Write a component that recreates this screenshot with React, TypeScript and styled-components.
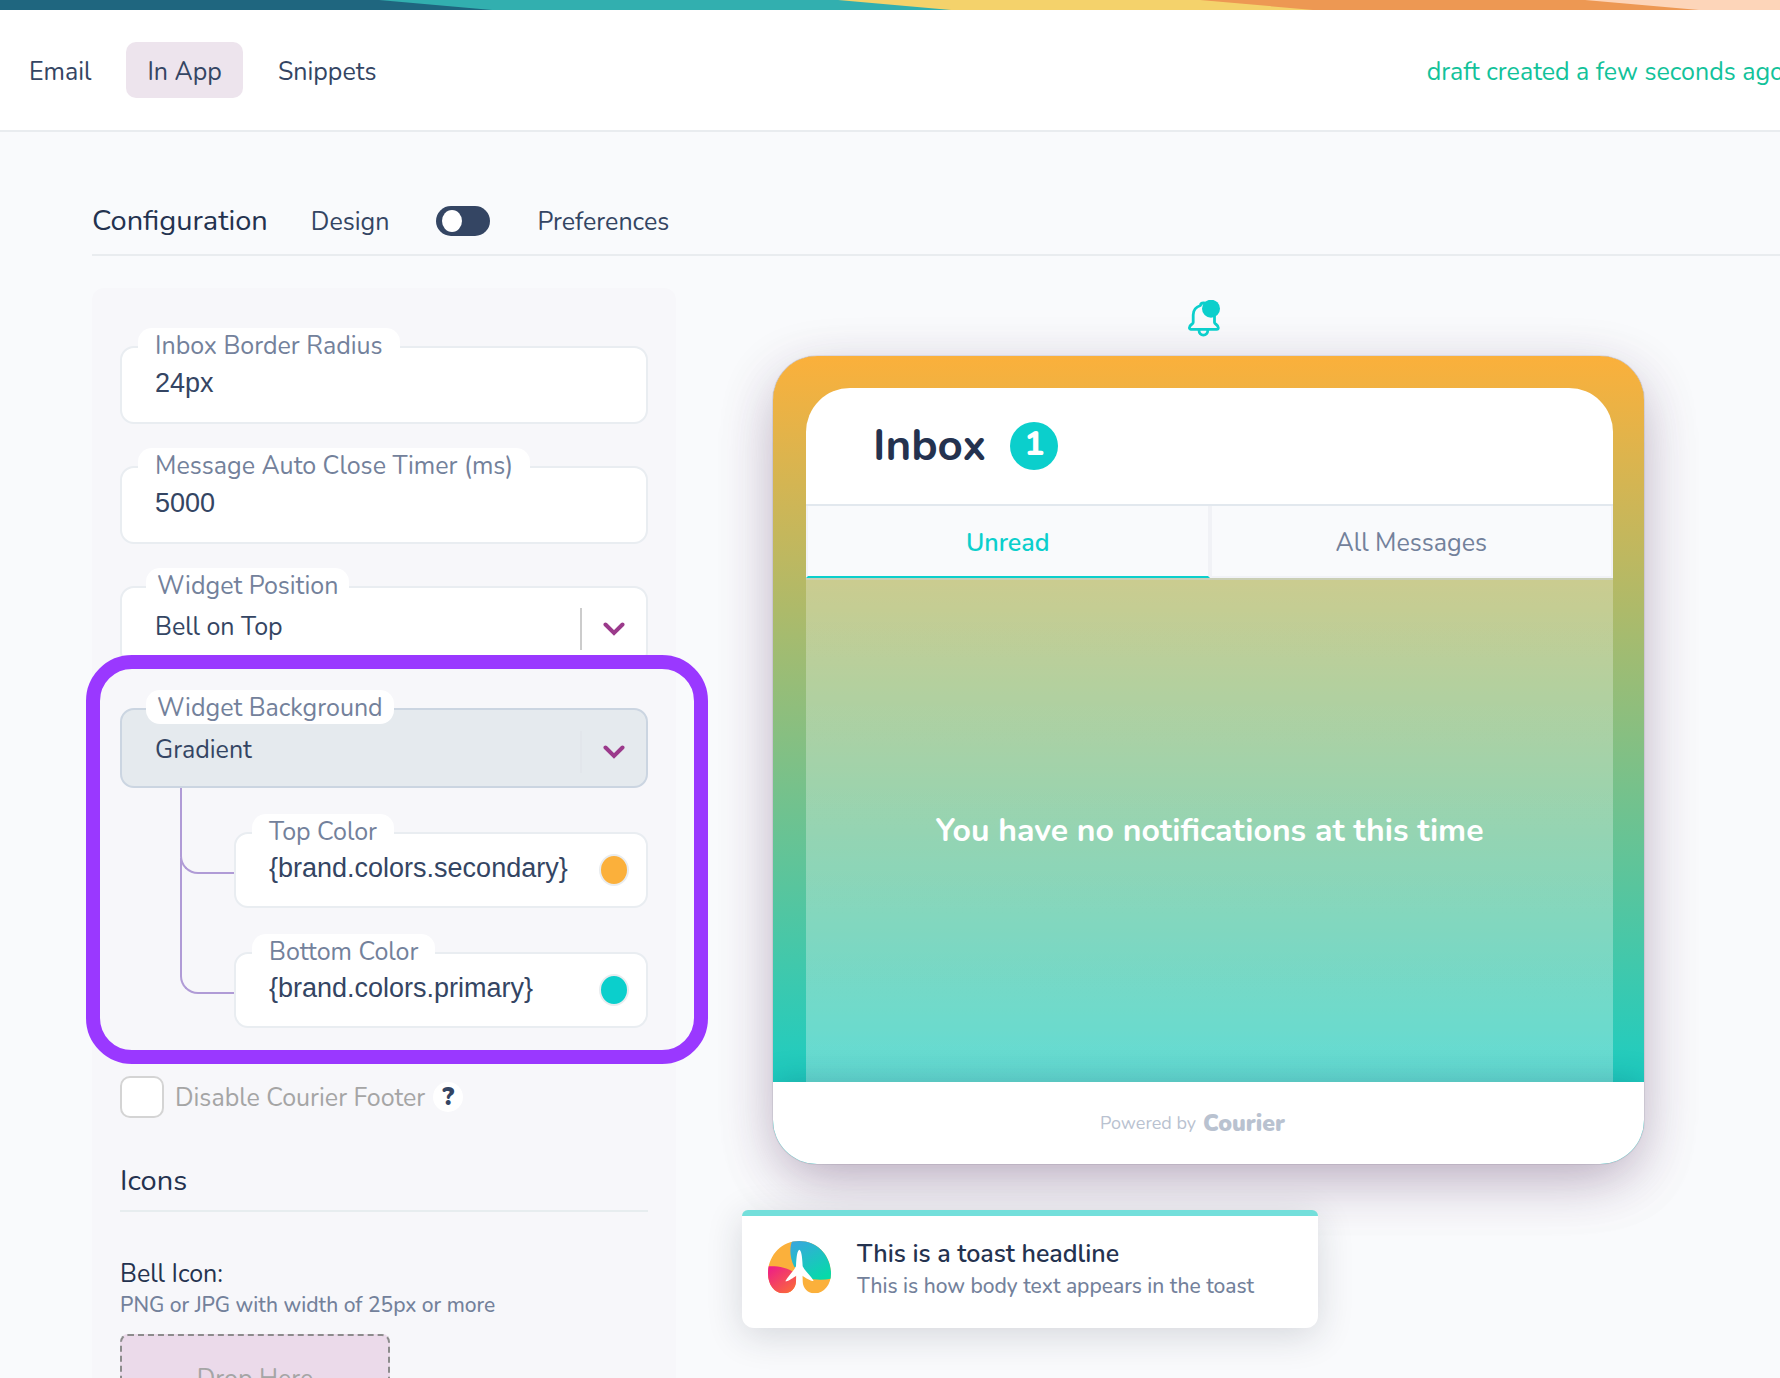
import React, { useState } from "react";
import styled, { createGlobalStyle, css } from "styled-components";

const color = {
  ink: "#24324f",
  text: "#344563",
  muted: "#73819b",
  faint: "#a5a5a5",
  line: "#e9ecef",
  teal: "#0bcfcc",
  amber: "#fbb03b",
  plum: "#9b3a8b",
  ring: "#9a38ff",
  branch: "#b09bd6",
  page: "#f9fafc",
  panel: "#f7f7fa",
};

const GlobalStyle = createGlobalStyle`
  *, *::before, *::after { box-sizing: border-box; }
  body {
    margin: 0;
    background: ${color.page};
    color: ${color.text};
    font-family: Nunito, Lato, "Open Sans", sans-serif;
    font-size: 25px;
    line-height: 32px;
  }
  button, input, select { font: inherit; color: inherit; }
`;

const Page = styled.div`
  height: 100vh;
  overflow: hidden;
`;

const Stripe = styled.svg`
  display: block;
  width: 100%;
  height: 10px;
`;

const Header = styled.header`
  display: flex;
  justify-content: space-between;
  align-items: center;
  height: 122px;
  padding-left: 8px;
  background: #fff;
  border-bottom: 2px solid ${color.line};
`;

const Nav = styled.nav`
  display: flex;
  gap: 14px;
`;

const NavTab = styled.button<{ $active?: boolean }>`
  height: 56px;
  padding: 3px 21px 0;
  border: 0;
  border-radius: 10px;
  background: ${(p) => (p.$active ? "#ede4ed" : "transparent")};
`;

const DraftStatus = styled.span`
  margin-right: -4px;
  padding-top: 3px;
  color: #12c29a;
  white-space: nowrap;
`;

const Main = styled.main`
  padding: 56px 0 0 92px;
`;

const ConfigBar = styled.div`
  display: flex;
  align-items: center;
  height: 68px;
  border-bottom: 2px solid ${color.line};
`;

const ConfigTitle = styled.h1`
  margin: 0 43px 0 0;
  color: ${color.ink};
  font-size: 29px;
  font-weight: 400;
`;

const SwitchLabel = styled.label`
  padding-top: 2px;
`;

const Toggle = styled.input`
  appearance: none;
  display: flex;
  align-items: center;
  width: 54px;
  height: 30px;
  margin: 0 47px;
  padding: 0 6px;
  border-radius: 15px;
  background: ${color.text};

  &::before {
    content: "";
    width: 20px;
    height: 22px;
    border-radius: 50%;
    background: #fff;
  }
  &:checked { justify-content: flex-end; }
`;

const Columns = styled.div`
  display: flex;
  align-items: flex-start;
  padding-top: 32px;
`;

const Panel = styled.section`
  flex: 0 0 584px;
  min-width: 0;
  padding: 58px 28px;
  border-radius: 12px;
  background: ${color.panel};
`;

const FieldStack = styled.div`
  display: grid;
  grid-template-columns: minmax(0, 1fr);
  gap: 42px;
`;

const Field = styled.div`
  position: relative;
`;

const FieldLabel = styled.label<{ $select?: boolean }>`
  position: absolute;
  top: -18px;
  left: ${(p) => (p.$select ? 26 : 18)}px;
  padding: 2px ${(p) => (p.$select ? 11 : 17)}px 0;
  border-radius: ${(p) => (p.$select ? "14px" : "14px 14px 0 0")};
  background: #fff;
  color: ${color.muted};
  white-space: nowrap;
`;

const FieldBox = styled.div<{ $kind: "text" | "color" | "select"; $focused?: boolean }>`
  display: flex;
  align-items: center;
  height: ${(p) => ({ text: 78, color: 76, select: 80 })[p.$kind]}px;
  padding: ${(p) => (p.$kind === "select" ? `${p.$focused ? 8 : 6}px 21px 0 0` : "0 17px 0 0")};
  border: 2px solid ${(p) => (p.$focused ? "#cbd5e1" : "#e9edf1")};
  border-radius: 14px;
  background: ${(p) => (p.$focused ? "#e5eaee" : "#fff")};
`;

const control = css`
  flex: 1;
  width: 100%;
  min-width: 0;
  height: 100%;
  border: 0;
  outline: 0;
  background: transparent;
`;

const TextInput = styled.input`
  ${control}
  padding: 0 0 3px 33px;
  font-family: "Liberation Sans", Arial, sans-serif;
  font-size: 27px;
`;

const Select = styled.select`
  ${control}
  appearance: none;
  padding: 0 0 4px 33px;
`;

const Divider = styled.span<{ $soft?: boolean }>`
  flex: none;
  width: 2px;
  height: 42px;
  margin-right: 21px;
  background: ${(p) => (p.$soft ? "#e2e6eb" : "#cccccc")};
`;

const Swatch = styled.button<{ $fill: string }>`
  flex: none;
  width: 30px;
  height: 32px;
  padding: 0;
  border: 2px solid ${color.line};
  border-radius: 50%;
  background: ${(p) => p.$fill};
`;

const Highlight = styled.div`
  position: relative;

  &::after {
    content: "";
    position: absolute;
    inset: -53px -60px -36px -34px;
    border: 14px solid ${color.ring};
    border-radius: 46px;
    pointer-events: none;
  }
`;

const Branches = styled.div`
  display: grid;
  grid-template-columns: minmax(0, 1fr);
  gap: 44px;
  padding: 44px 0 0 114px;
`;

const Branch = styled(Field)<{ $reach: number }>`
  &::before {
    content: "";
    position: absolute;
    right: 100%;
    bottom: 34px;
    width: 54px;
    height: ${(p) => p.$reach}px;
    border: solid ${color.branch};
    border-width: 0 0 2px 2px;
    border-bottom-left-radius: 18px;
  }
`;

const CheckRow = styled.div`
  display: flex;
  align-items: center;
  margin-top: 48px;
  color: ${color.faint};

  label { padding-top: 2px; }
`;

const Checkbox = styled.input`
  appearance: none;
  width: 44px;
  height: 42px;
  margin: 0 11px 0 0;
  border: 2px solid #d4d4d4;
  border-radius: 10px;
  background: #fff;
`;

const Help = styled.button`
  width: 30px;
  height: 30px;
  margin-left: 8px;
  padding: 0;
  border: 0;
  border-radius: 50%;
  background: #fff;
  color: ${color.text};
  font-weight: 900;
  line-height: 30px;
`;

const SectionTitle = styled.h2`
  margin: 45px 0 0;
  padding-bottom: 11px;
  border-bottom: 2px solid #e7edef;
  color: ${color.ink};
  font-size: 29px;
  font-weight: 400;
  line-height: 36px;
`;

const UploadTitle = styled.h3`
  margin: 47px 0 0;
  color: ${color.ink};
  font-size: 25px;
  font-weight: 400;
  line-height: 30px;
`;

const Hint = styled.p`
  margin: 0;
  color: ${color.muted};
  font-size: 21px;
  font-weight: 500;
`;

const DropZone = styled.button`
  width: 270px;
  height: 90px;
  margin-top: 13px;
  border: 2px dashed #8c8c8c;
  border-radius: 8px;
  background: #ebdaea;
  color: ${color.faint};
`;

const Preview = styled.section`
  flex: 1;
  min-width: 0;
  padding: 12px 136px 0 66px;
`;

const BellRow = styled.div`
  display: flex;
  justify-content: center;
  margin: 0 0 18px 22px;
`;

const Card = styled.article`
  margin-left: 31px;
  border-radius: 44px;
  overflow: hidden;
  background: linear-gradient(${color.amber}, ${color.teal} 97%);
  box-shadow:
    0 0 1px rgba(30, 30, 50, 0.8),
    0 16px 60px -8px rgba(28, 39, 58, 0.26),
    0 20px 60px -8px rgba(157, 55, 137, 0.22);
`;

const CardBody = styled.div`
  padding: 32px 31px 0 33px;
`;

const InboxHead = styled.div`
  display: flex;
  align-items: center;
  gap: 24px;
  height: 116px;
  padding-left: 67px;
  border-radius: 44px 44px 0 0;
  background: #fff;
`;

const InboxTitle = styled.h2`
  margin: 0;
  color: ${color.ink};
  font-size: 44px;
  font-weight: 700;
  line-height: 56px;
`;

const Count = styled.span`
  width: 48px;
  height: 48px;
  border-radius: 50%;
  background: ${color.teal};
  color: #fff;
  font-size: 33px;
  font-weight: 800;
  line-height: 46px;
  text-align: center;
`;

const Tabs = styled.div`
  display: grid;
  grid-template-columns: 1fr 1fr;
  border-top: 2px solid #e2e8ee;
  background: ${color.page};
`;

const InboxTab = styled.button<{ $active?: boolean }>`
  height: 72px;
  padding: 3px 0 0;
  border: 2px solid #f1f2f6;
  border-top-width: 0;
  border-bottom-color: ${(p) => (p.$active ? color.teal : "#f1f2f6")};
  background: transparent;
  color: ${(p) => (p.$active ? color.teal : color.muted)};
  font-weight: ${(p) => (p.$active ? 600 : 400)};
`;

const Empty = styled.p`
  display: flex;
  align-items: center;
  justify-content: center;
  height: 504px;
  margin: 0;
  border-top: 2px solid rgba(200, 208, 215, 0.5);
  background: linear-gradient(rgba(255, 255, 255, 0.28), rgba(255, 255, 255, 0.3));
  color: #fff;
  font-size: 32px;
  font-weight: 700;
`;

const CardFooter = styled.footer`
  display: flex;
  align-items: center;
  justify-content: center;
  gap: 7px;
  position: relative;
  height: 82px;
  padding-right: 32px;
  background: #fff;
  box-shadow: 0 0 32px rgba(28, 39, 58, 0.24);
  color: #b9c2d0;
  font-size: 18px;
`;

const Wordmark = styled.strong`
  padding-top: 2px;
  font-size: 23px;
  font-weight: 900;
`;

const Toast = styled.aside`
  display: flex;
  align-items: flex-start;
  gap: 26px;
  position: relative;
  max-width: 576px;
  height: 118px;
  margin-top: 46px;
  padding: 22px 26px;
  border-top: 6px solid #73dfdb;
  border-radius: 6px 6px 12px 12px;
  background: #fff;
  box-shadow: 0 8px 36px rgba(28, 39, 58, 0.16);
`;

const ToastLogo = styled.svg`
  flex: none;
  width: 63px;
  height: 53px;
  margin-top: 3px;
`;

const ToastTitle = styled.h3`
  margin: 0;
  color: ${color.ink};
  font-size: 25px;
  font-weight: 600;
`;

function TopStripe() {
  return (
    <Stripe viewBox="0 0 1780 10" preserveAspectRatio="none" aria-hidden="true">
      <rect width="1780" height="10" fill="#1f667f" />
      <path d="M379 0H1780V10H492Z" fill="#32afaf" />
      <path d="M838 0H1780V10H951Z" fill="#f4d26b" />
      <path d="M1200 0H1780V10H1313Z" fill="#ed9853" />
      <path d="M1585 0H1780V10H1699Z" fill="#fdd5b9" />
    </Stripe>
  );
}

function Chevron() {
  return (
    <svg width="22" height="14" viewBox="0 0 22 14" fill="none" aria-hidden="true">
      <path d="M2.500 2.500L11 11L19.500 2.500" stroke={color.plum} strokeWidth="4" strokeLinecap="round" strokeLinejoin="miter" />
    </svg>
  );
}

function Bell() {
  return (
    <svg width="32" height="38" viewBox="0 0 32 38" fill="none" role="img" aria-label="Notifications">
      <path
        d="M12.500 5.500C12.500 3.800 13.800 3 15.600 3s3.200.8 3.200 2.500C24 7 26.500 10.500 26.500 15v7.500c0 1.600 3.800 2.200 3.800 5.200 0 1.200-.8 1.600-1.600 1.600H3c-1 0-1.600-.6-1.600-1.600 0-3 3.800-3.600 3.800-5.200V15c0-4.500 2.400-8 7.300-9.500Z"
        stroke={color.teal}
        strokeWidth="2.800"
        strokeLinejoin="round"
      />
      <path d="M11 30c0 3.300 2 5.200 4.400 5.200s4.400-1.900 4.400-5.200" stroke={color.teal} strokeWidth="2.800" />
      <circle cx="23" cy="8.700" r="9" fill={color.teal} />
    </svg>
  );
}

function CourierMark() {
  return (
    <ToastLogo viewBox="0 0 189 159" role="img" aria-label="Courier">
      <defs>
        <linearGradient id="sky" x1="0.200" y1="0" x2="0.800" y2="1">
          <stop offset="0" stopColor="#37a9dc" />
          <stop offset="1" stopColor="#05dba8" />
        </linearGradient>
        <linearGradient id="rose" x1="0" y1="0" x2="0.800" y2="1">
          <stop offset="0" stopColor="#ec1a8b" />
          <stop offset="1" stopColor="#fb6a3a" />
        </linearGradient>
        <clipPath id="wing">
          <path d="M94 0C146 0 189 42 189 98C189 130 168 157 141 157C119 157 105 141 104 122L103 104H85L84 122C83 141 69 157 46 157C19 157 0 130 0 98C0 42 42 0 94 0Z" />
        </clipPath>
      </defs>
      <g clipPath="url(#wing)">
        <rect width="189" height="159" fill={color.amber} />
        <path d="M72 0H189V113C165 118 140 117 118 111L78 76C66 50 64 24 72 0Z" fill="url(#sky)" />
        <path d="M0 76C34 74 66 82 86 100V159H0Z" fill="url(#rose)" />
      </g>
      <path
        d="M94 26C99 28 103 42 104 76C112 92 130 105 137 120C126 120 111 109 103 104L102 159H86L85 104C77 109 63 120 52 121C59 106 76 92 84 76C85 42 89 28 94 26Z"
        fill="#fff"
      />
    </ToastLogo>
  );
}

type TextFieldProps = { id: string; label: string; value: string; fill?: string };

function TextFieldContent({ id, label, value, fill }: TextFieldProps) {
  return (
    <>
      <FieldBox $kind={fill ? "color" : "text"}>
        <TextInput id={id} defaultValue={value} />
        {fill && <Swatch type="button" $fill={fill} aria-label={`Pick ${label}`} />}
      </FieldBox>
      <FieldLabel htmlFor={id}>{label}</FieldLabel>
    </>
  );
}

type SelectFieldProps = { id: string; label: string; options: string[]; focused?: boolean };

function SelectField({ id, label, options, focused }: SelectFieldProps) {
  return (
    <Field>
      <FieldBox $kind="select" $focused={focused}>
        <Select id={id}>
          {options.map((option) => (
            <option key={option}>{option}</option>
          ))}
        </Select>
        <Divider $soft={focused} />
        <Chevron />
      </FieldBox>
      <FieldLabel $select htmlFor={id}>{label}</FieldLabel>
    </Field>
  );
}

export default function App() {
  const [section, setSection] = useState("In App");
  const [tab, setTab] = useState("Unread");

  return (
    <Page>
      <GlobalStyle />
      <TopStripe />
      <Header>
        <Nav>
          {["Email", "In App", "Snippets"].map((name) => (
            <NavTab key={name} type="button" $active={name === section} onClick={() => setSection(name)}>
              {name}
            </NavTab>
          ))}
        </Nav>
        <DraftStatus>draft created a few seconds ago</DraftStatus>
      </Header>
      <Main>
        <ConfigBar>
          <ConfigTitle>Configuration</ConfigTitle>
          <SwitchLabel htmlFor="mode">Design</SwitchLabel>
          <Toggle id="mode" type="checkbox" role="switch" />
          <SwitchLabel htmlFor="mode">Preferences</SwitchLabel>
        </ConfigBar>
        <Columns>
          <Panel>
            <FieldStack>
              <Field>
                <TextFieldContent id="radius" label="Inbox Border Radius" value="24px" />
              </Field>
              <Field>
                <TextFieldContent id="timer" label="Message Auto Close Timer (ms)" value="5000" />
              </Field>
              <SelectField id="position" label="Widget Position" options={["Bell on Top", "Bell on Bottom"]} />
              <Highlight>
                <SelectField id="background" label="Widget Background" options={["Gradient", "Solid"]} focused />
                <Branches>
                  <Branch $reach={86}>
                    <TextFieldContent id="top" label="Top Color" value="{brand.colors.secondary}" fill={color.amber} />
                  </Branch>
                  <Branch $reach={136}>
                    <TextFieldContent id="bottom" label="Bottom Color" value="{brand.colors.primary}" fill={color.teal} />
                  </Branch>
                </Branches>
              </Highlight>
            </FieldStack>
            <CheckRow>
              <Checkbox id="footer" type="checkbox" />
              <label htmlFor="footer">Disable Courier Footer</label>
              <Help type="button">?</Help>
            </CheckRow>
            <SectionTitle>Icons</SectionTitle>
            <UploadTitle>Bell Icon:</UploadTitle>
            <Hint>PNG or JPG with width of 25px or more</Hint>
            <DropZone type="button">Drop Here</DropZone>
          </Panel>
          <Preview>
            <BellRow>
              <Bell />
            </BellRow>
            <Card>
              <CardBody>
                <InboxHead>
                  <InboxTitle>Inbox</InboxTitle>
                  <Count>1</Count>
                </InboxHead>
                <Tabs>
                  {["Unread", "All Messages"].map((name) => (
                    <InboxTab key={name} type="button" $active={name === tab} onClick={() => setTab(name)}>
                      {name}
                    </InboxTab>
                  ))}
                </Tabs>
                <Empty>You have no notifications at this time</Empty>
              </CardBody>
              <CardFooter>
                <span>Powered by</span>
                <Wordmark>Courier</Wordmark>
              </CardFooter>
            </Card>
            <Toast>
              <CourierMark />
              <div>
                <ToastTitle>This is a toast headline</ToastTitle>
                <Hint>This is how body text appears in the toast</Hint>
              </div>
            </Toast>
          </Preview>
        </Columns>
      </Main>
    </Page>
  );
}
